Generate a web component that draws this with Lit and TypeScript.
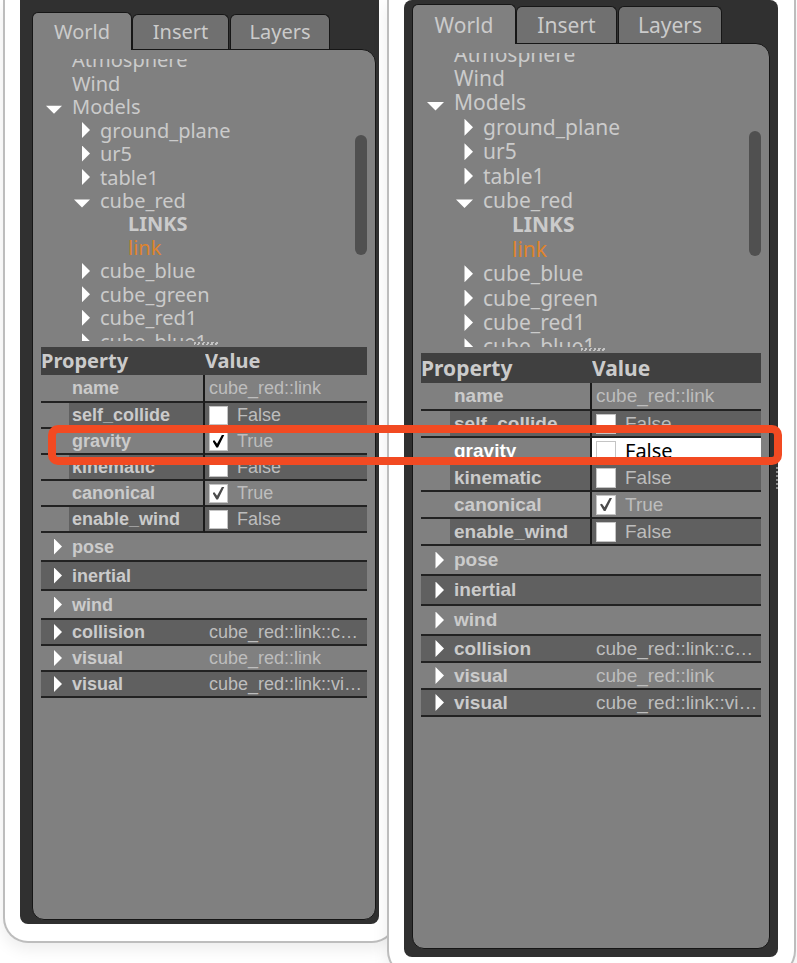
import { LitElement, html, css, nothing } from "lit";
import { customElement, property } from "lit/decorators.js";
import { classMap } from "lit/directives/class-map.js";

interface TreeItem {
  label: string;
  depth: number;
  state?: "open" | "closed";
  kind?: "heading" | "selected";
}

interface PropertyRow {
  label: string;
  value?: string;
  checked?: boolean;
  group?: boolean;
  tall?: boolean;
}

const TREE: TreeItem[] = [
  { label: "Atmosphere", depth: 0 },
  { label: "Wind", depth: 0 },
  { label: "Models", depth: 0, state: "open" },
  { label: "ground_plane", depth: 1, state: "closed" },
  { label: "ur5", depth: 1, state: "closed" },
  { label: "table1", depth: 1, state: "closed" },
  { label: "cube_red", depth: 1, state: "open" },
  { label: "LINKS", depth: 2, kind: "heading" },
  { label: "link", depth: 2, kind: "selected" },
  { label: "cube_blue", depth: 1, state: "closed" },
  { label: "cube_green", depth: 1, state: "closed" },
  { label: "cube_red1", depth: 1, state: "closed" },
  { label: "cube_blue1", depth: 1, state: "closed" },
];

const propertyRows = (gravity: boolean): PropertyRow[] => [
  { label: "name", value: "cube_red::link" },
  { label: "self_collide", checked: false },
  { label: "gravity", checked: gravity },
  { label: "kinematic", checked: false },
  { label: "canonical", checked: true },
  { label: "enable_wind", checked: false },
  { label: "pose", group: true, tall: true },
  { label: "inertial", group: true, tall: true },
  { label: "wind", group: true, tall: true },
  { label: "collision", value: "cube_red::link::c…", group: true },
  { label: "visual", value: "cube_red::link", group: true },
  { label: "visual", value: "cube_red::link::vi…", group: true },
];

@customElement("world-panel")
export class WorldPanel extends LitElement {
  @property({ type: Boolean }) gravity = false;
  @property({ type: Boolean }) editing = false;

  static styles = css`
    :host {
      --tree-font: 20px;
      --head-font: 20px;
      --cell-font: 18px;
      --tab: 100px;
      --tab-mid: 97px;
      --tab-height: 35px;
      --tree-height: 282px;
      --rows-height: 305px;
      --thumb: 120px;
      --thumb-top: 76px;
      --head: 28px;
      --row: 26px;
      --row-tall: 29px;
      --name-col: 164px;
      --indent: 28px;
      --lead: 5px;
      --arrow: 16px;
      --box: 19px;
      --pad: 12px 3px 4px 12px;
      display: flex;
      flex-direction: column;
      flex: 1;
      box-sizing: border-box;
      padding: var(--pad);
      background: #303030;
      border-radius: 0 0 8px 8px;
      color: #cbcbcb;
      font-family: "Noto Sans", sans-serif;
      position: relative;
    }
    :host([large]) {
      --tree-font: 21px;
      --head-font: 21px;
      --cell-font: 19px;
      --tab: 104px;
      --tab-mid: 101px;
      --tab-height: 37px;
      --tree-height: 294px;
      --rows-height: 317px;
      --thumb: 125px;
      --thumb-top: 78px;
      --head: 30px;
      --row: 27px;
      --row-tall: 30px;
      --name-col: 171px;
      --indent: 29px;
      --lead: 6px;
      --arrow: 17px;
      --box: 20px;
      --pad: 4px 8px 8px 8px;
      border-radius: 8px;
    }
    * {
      box-sizing: border-box;
    }
    button {
      font: inherit;
      color: inherit;
      border: 0;
      padding: 0;
      background: none;
    }
    .tabs {
      display: flex;
      align-items: flex-end;
      gap: 1px;
    }
    .tab {
      width: var(--tab);
      height: var(--tab-height);
      border: 1px solid #161616;
      border-bottom: 0;
      border-radius: 6px 6px 0 0;
      background: #707070;
      font-size: var(--tree-font);
      line-height: 32px;
    }
    .tab.mid {
      width: var(--tab-mid);
    }
    .tab.active {
      height: calc(var(--tab-height) + 3px);
      margin-bottom: -1px;
      background: #808080;
      margin-right: -1px;
      z-index: 1;
    }
    .pane {
      flex: 1;
      padding: 9px 8px;
      background: #808080;
      border: 1px solid #161616;
      border-radius: 0 14px 12px 12px;
    }
    .tree {
      display: flex;
      height: var(--tree-height);
      overflow: hidden;
    }
    .items {
      flex: 1;
      display: grid;
      grid-auto-rows: 1fr;
      height: var(--rows-height);
      margin: -11px 0 0;
      padding: 0;
      list-style: none;
      font-size: var(--tree-font);
    }
    .item {
      display: flex;
      align-items: center;
      gap: 10px;
      padding-left: var(--lead);
      line-height: 23px;
    }
    .item.d1 {
      padding-left: calc(var(--lead) + var(--indent));
    }
    .item.d2 {
      padding-left: calc(var(--lead) + 2 * var(--indent));
    }
    .heading {
      font-weight: 700;
    }
    .selected {
      color: #df842c;
    }
    .expander {
      flex: none;
      width: var(--arrow);
      height: var(--arrow);
    }
    .closed,
    .open {
      background: #fff;
      clip-path: polygon(50% 0, 100% 50%, 50% 100%);
    }
    .open {
      clip-path: polygon(0 44%, 100% 44%, 50% 94%);
    }
    .thumb {
      flex: none;
      width: 12px;
      height: var(--thumb);
      margin-top: var(--thumb-top);
      border-radius: 6px;
      background: #505050;
    }
    .splitter {
      height: 6px;
      display: flex;
      justify-content: center;
      padding: 1px 0 0 4px;
    }
    .grip {
      width: 24px;
      height: 3px;
      background: repeating-linear-gradient(115deg, #c4c4c4 0 2px, #808080 2px 4px);
    }
    table {
      width: 100%;
      table-layout: fixed;
      border-collapse: separate;
      border-spacing: 0;
      font-family: "Liberation Sans", Arial, sans-serif;
      font-size: var(--cell-font);
    }
    th,
    td {
      padding: 0;
      text-align: left;
      white-space: nowrap;
      overflow: hidden;
    }
    thead th {
      height: var(--head);
      background: #404040;
      font-family: "Noto Sans", sans-serif;
      font-size: var(--head-font);
      line-height: 26px;
    }
    .name-col {
      width: var(--name-col);
    }
    tbody th,
    tbody td {
      height: var(--row);
      border-bottom: 2px solid #222;
      line-height: 22px;
    }
    tbody tr:first-child > * {
      height: 28px;
    }
    tbody td {
      padding-left: 4px;
      color: #bdbdbd;
    }
    .tall th,
    .tall td {
      height: var(--row-tall);
    }
    .odd {
      background: #606060;
    }
    .leaf th {
      border-right: 2px solid #1a1a1a;
    }
    .leaf.odd th {
      background: linear-gradient(to right, #808080 var(--indent), #606060 var(--indent));
    }
    .name {
      display: flex;
      align-items: center;
      gap: 10px;
      padding-left: var(--lead);
    }
    tbody .editing th {
      color: #fff;
    }
    tbody .editing td {
      background: #fff;
      color: #000;
      font-family: "Noto Sans", sans-serif;
      font-size: 20px;
    }
    .toggle {
      display: flex;
      align-items: center;
      gap: 9px;
    }
    input {
      appearance: none;
      flex: none;
      width: var(--box);
      height: var(--box);
      margin: 0;
      border: 1px solid #c4c4c4;
      background: #fff;
      display: grid;
      place-items: center;
    }
    input:checked::before {
      content: "";
      width: 12px;
      height: 13px;
      background: #4c4c4c;
      clip-path: polygon(0 50%, 16% 44%, 38% 72%, 80% 0, 100% 0, 46% 100%, 32% 100%);
    }
    .strong input:checked::before {
      background: #000;
    }
    .dock-grip {
      position: absolute;
      right: 0;
      top: 467px;
      width: 2px;
      height: 24px;
      background: repeating-linear-gradient(#8a8a8a 0 2px, #303030 2px 4px);
    }
  `;

  private renderItem(item: TreeItem) {
    const name = { item: true, d1: item.depth === 1, d2: item.depth === 2 };
    const text = { heading: item.kind === "heading", selected: item.kind === "selected" };
    return html`<li class=${classMap(name)}>
      ${item.state
        ? html`<button class="expander ${item.state}" aria-label="Toggle ${item.label}"></button>`
        : html`<span class="expander"></span>`}
      <span class=${classMap(text)}>${item.label}</span>
    </li>`;
  }

  private renderRow(row: PropertyRow, index: number) {
    const isToggle = row.checked !== undefined;
    const classes = {
      odd: index % 2 === 1,
      leaf: !row.group,
      tall: !!row.tall,
      editing: this.editing && row.label === "gravity",
      strong: row.label === "gravity",
    };
    return html`<tr class=${classMap(classes)}>
      <th scope="row">
        <div class="name">
          ${row.group
            ? html`<button class="expander closed" aria-label="Expand ${row.label}"></button>`
            : html`<span class="expander"></span>`}
          <span>${row.label}</span>
        </div>
      </th>
      <td>
        ${isToggle
          ? html`<label class="toggle">
              <input type="checkbox" .checked=${row.checked!} />
              <span>${row.checked ? "True" : "False"}</span>
            </label>`
          : row.value ?? nothing}
      </td>
    </tr>`;
  }

  render() {
    return html`
      <div class="tabs" role="tablist">
        <button class="tab active" role="tab" aria-selected="true">World</button>
        <button class="tab mid" role="tab" aria-selected="false">Insert</button>
        <button class="tab" role="tab" aria-selected="false">Layers</button>
      </div>
      <div class="pane" role="tabpanel">
        <div class="tree">
          <ul class="items">
            ${TREE.map((item) => this.renderItem(item))}
          </ul>
          <div class="thumb"></div>
        </div>
        <div class="splitter"><div class="grip"></div></div>
        <table>
          <thead>
            <tr>
              <th class="name-col" scope="col">Property</th>
              <th scope="col">Value</th>
            </tr>
          </thead>
          <tbody>
            ${propertyRows(this.gravity).map((row, i) => this.renderRow(row, i))}
          </tbody>
        </table>
      </div>
      ${this.editing ? html`<div class="dock-grip"></div>` : nothing}
    `;
  }
}

@customElement("app-root")
export class AppRoot extends LitElement {
  static styles = css`
    :host {
      display: block;
    }
    .stage {
      position: relative;
      display: grid;
      grid-template-columns: 384fr 409fr;
      min-height: 100vh;
      padding: 0 1px 0 3px;
      box-sizing: border-box;
      background: #fff;
      overflow: hidden;
    }
    .card {
      display: flex;
      box-sizing: border-box;
      padding: 0 16px 17px 15px;
      border: 2px solid #bdbdbd;
      border-top: 0;
      border-radius: 0 0 25px 25px;
      background: #fff;
      box-shadow: 0 6px 16px rgba(0, 0, 0, 0.08);
    }
    .before {
      margin: 0 -10px 20px 0;
    }
    .after {
      margin-bottom: -13px;
      z-index: 1;
    }
    .marker {
      position: absolute;
      z-index: 2;
      top: 425px;
      left: 48px;
      right: 15px;
      height: 40px;
      box-sizing: border-box;
      border: 8px solid #f24a22;
      border-radius: 10px;
      pointer-events: none;
    }
  `;

  render() {
    return html`
      <main class="stage">
        <section class="card before"><world-panel gravity></world-panel></section>
        <section class="card after"><world-panel large editing></world-panel></section>
        <div class="marker"></div>
      </main>
    `;
  }
}
